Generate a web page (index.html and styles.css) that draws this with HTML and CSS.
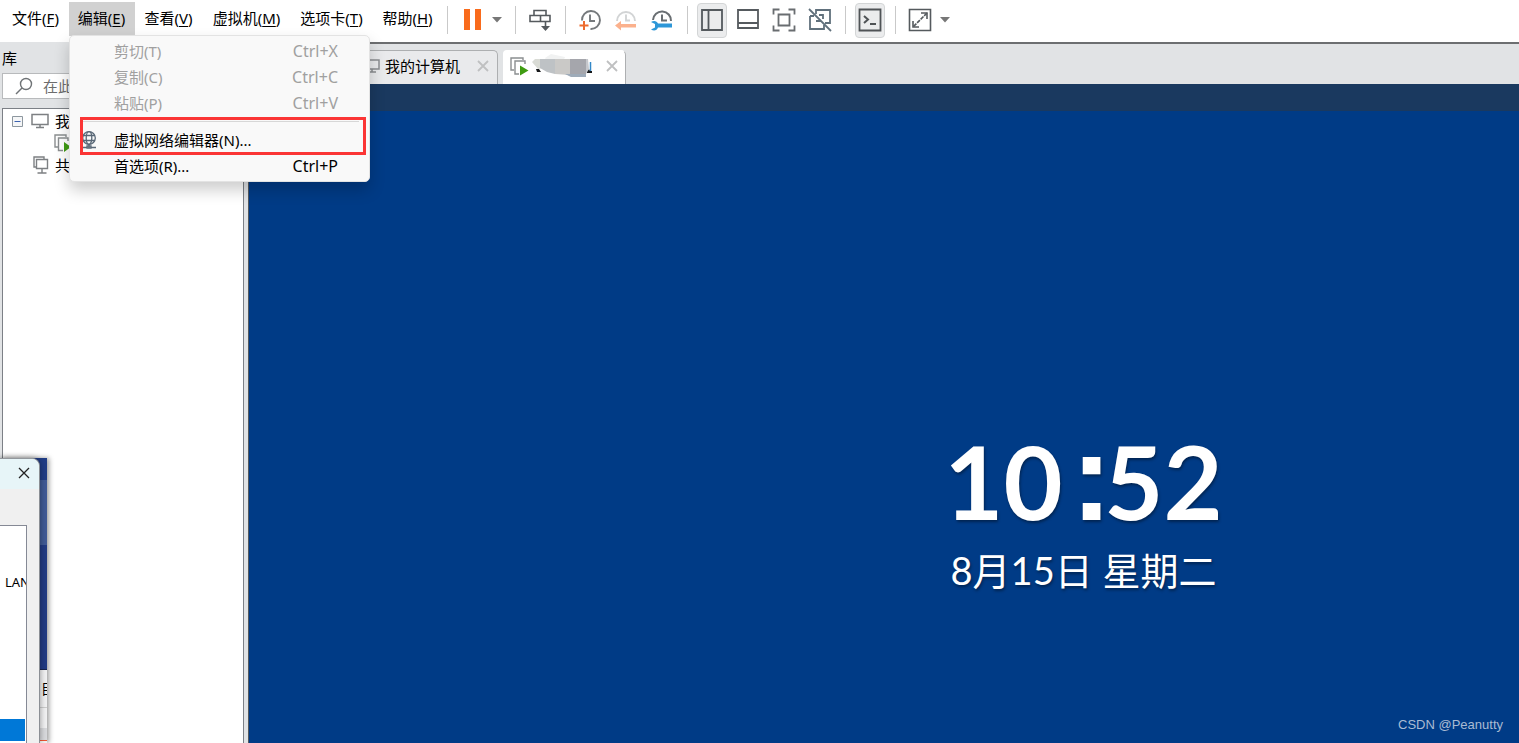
FILE: index.html
```html
<!DOCTYPE html>
<html lang="zh-CN">
<head>
<meta charset="utf-8">
<title>虚拟机</title>
<link rel="stylesheet" href="styles.css">
</head>
<body>
<header class="topbar">
  <nav class="menubar">
    <button class="menu-btn">文件(<u>F</u>)</button>
    <button class="menu-btn active">编辑(<u>E</u>)</button>
    <button class="menu-btn w-view">查看(<u>V</u>)</button>
    <button class="menu-btn w-vm">虚拟机(<u>M</u>)</button>
    <button class="menu-btn w-tabs">选项卡(<u>T</u>)</button>
    <button class="menu-btn w-help">帮助(<u>H</u>)</button>
  </nav>
  <div class="tools">
    <div class="group tight">
      <button class="tool" aria-label="暂停"><svg width="24" height="24"><path d="M4 1h6v21H4zM15 1h6v21h-6z" fill="#f96b1c"/></svg></button>
      <button class="caret" aria-label="电源选项"><svg width="10" height="6"><path d="M0 0h10L5 5.500z" fill="#777"/></svg></button>
    </div>
    <div class="group">
      <button class="tool" aria-label="发送按键"><svg width="24" height="24" fill="none" stroke="#555a5e" stroke-width="1.600"><path d="M6 2.500h12v5H6zM2 7.500h10.500v6H2zM12.500 7.500H22v6h-9.500zM17.500 13.500v8"/><path d="M13 18h9l-4.500 5z" fill="#555a5e" stroke="none"/></svg></button>
    </div>
    <div class="group">
      <button class="tool" aria-label="拍摄快照"><svg width="24" height="24" fill="none" stroke="#75797c" stroke-width="1.900"><path d="M4 12.500a9 9 0 1 1 8.500 8.500M12 6.500V13h5"/><path d="M1.500 17.500h9M6 13v9" stroke="#ed6b2d" stroke-width="2"/></svg></button>
      <button class="tool" aria-label="恢复快照"><svg width="24" height="24" fill="none" stroke="#d2d4d5" stroke-width="1.900"><path d="M3 13a9 9 0 1 1 18 0M12 6.500V12.500h4"/><path d="M1 17.500l6-4.500v3h15v3.500H7v3z" fill="#fbb18d" stroke="none"/></svg></button>
      <button class="tool" aria-label="管理快照"><svg width="24" height="24" fill="none" stroke="#696e72" stroke-width="2"><path d="M3 12a9 9 0 1 1 18 1M12 6.500V12.500h5"/><path d="M1 14c3-2 6-1 7 1.500h14v4H8c-1 3-4 4-7 2l4-2v-3.500z" fill="#2d97d8" stroke="none"/></svg></button>
    </div>
    <div class="group">
      <button class="tool on" aria-label="显示库"><svg width="24" height="24" fill="none" stroke="#555a5e" stroke-width="1.800"><path d="M2 2h20v20H2zM8.500 2v20"/></svg></button>
      <button class="tool" aria-label="缩略图栏"><svg width="24" height="24" fill="none" stroke="#555a5e" stroke-width="1.800"><path d="M2 2h20v18H2zM2 15h20"/></svg></button>
      <button class="tool" aria-label="全屏"><svg width="24" height="24" fill="none" stroke="#696d70" stroke-width="1.800"><path d="M6.500 6.500h11v11h-11zM1.500 6.500v-5h6M16.500 1.500h6v5M1.500 17.500v5h6M16.500 22.500h6v-5"/></svg></button>
      <button class="tool" aria-label="Unity"><svg width="24" height="24" fill="none" stroke="#60707c" stroke-width="1.800"><path d="M8 6V2h14v13h-5M2 8v13h14v-4M2 8h4M8 13h5M15 11V7h-4"/><path d="M1 1l22 22"/></svg></button>
    </div>
    <div class="group">
      <button class="tool on" aria-label="控制台"><svg width="24" height="24" fill="none" stroke="#4f5356" stroke-width="1.800"><path d="M1.500 1.500h21v21h-21z"/><path d="M6 8l4 3.500L6 15M12 16h6" stroke-width="2"/></svg></button>
    </div>
    <div class="group tight">
      <button class="tool" aria-label="拉伸"><svg width="24" height="24" fill="none" stroke="#555a5e" stroke-width="1.600"><path d="M1.500 1.500h21v21h-21zM13 5h6v6M5 13v6h6"/><path d="M19 5L5 19" stroke-dasharray="4 1"/></svg></button>
      <button class="caret" aria-label="拉伸选项"><svg width="10" height="6"><path d="M0 0h10L5 5.500z" fill="#777"/></svg></button>
    </div>
  </div>

  <div class="dropdown">
    <button class="item" disabled><span>剪切(T)</span><span class="key">Ctrl+X</span></button>
    <button class="item" disabled><span>复制(C)</span><span class="key">Ctrl+C</span></button>
    <button class="item" disabled><span>粘贴(P)</span><span class="key">Ctrl+V</span></button>
    <hr class="rule">
    <button class="item"><svg class="net" width="16" height="18" fill="none" stroke="#596877" stroke-width="1.300"><ellipse cx="8" cy="7" rx="6.300" ry="6.300"/><ellipse cx="8" cy="7" rx="2.800" ry="6.300"/><path d="M2 4.500h12M2 9.500h12M8 13v4M1 16.500h5M10 16.500h5M6 15h4v2H6z"/></svg><span>虚拟网络编辑器(N)...</span></button>
    <button class="item"><span>首选项(R)...</span><span class="key">Ctrl+P</span></button>
    <div class="highlight"></div>
  </div>
</header>

<div class="workspace">
  <aside class="library">
    <h2 class="lib-title">库</h2>
    <div class="search">
      <svg width="18" height="18" fill="none" stroke="#6f7376" stroke-width="1.400"><circle cx="11" cy="7" r="5.500"/><path d="M7 11l-6 6"/></svg>
      <input class="search-input" aria-label="搜索" placeholder="在此">
    </div>
    <div class="tree">
      <div class="node"><svg class="toggle" width="11" height="11"><path d="M.5.5h10v10H.5z" fill="#f5f6f7" stroke="#8d979f"/><path d="M2.500 5.500h6" stroke="#3c62b0"/></svg><svg width="18" height="16" fill="none" stroke="#7d8083" stroke-width="1.500"><path d="M1 1.500h16v10H1zM9 12v2.500M5 14.500h8"/></svg><span>我</span></div>
      <div class="node child"><svg width="18" height="18" fill="none" stroke="#8b8e90" stroke-width="1.400"><path d="M4 13H1V1h11v2M14 7V4H4.500v12.500H9"/><path d="M10 8l7 5-7 5z" fill="#3f9c12" stroke="none"/></svg></div>
      <div class="node shared"><svg width="16" height="18" fill="none" stroke="#7d8083" stroke-width="1.400"><path d="M3 11H1V1h10v2M3.500 3.500h11v9h-11zM9 13v4M4.500 17h9"/></svg><span>共</span></div>
    </div>
  </aside>

  <main class="main">
    <div class="tabs">
      <div class="tab home">
        <svg width="16" height="16" fill="none" stroke="#8a8d90" stroke-width="1.500"><path d="M1 2h13v9H1zM7 11v3M4 14h7"/></svg>
        <span>我的计算机</span>
        <button class="close" aria-label="关闭我的计算机"><svg width="12" height="12" stroke="#bfc0c1" stroke-width="1.800"><path d="M1 1l10 10M11 1L1 11"/></svg></button>
      </div>
      <div class="tab current">
        <svg width="19" height="19" fill="none" stroke="#8b8e90" stroke-width="1.400"><path d="M4 13H1V1h12v2M15 7V4H5v13h4"/><path d="M10 8.500l8.500 5-8.500 5z" fill="#3f9c12" stroke="none"/></svg>
        <svg class="mosaic" width="62" height="26"><path d="M13 5l6-4 14 3-2 5-16-1z" fill="#f1f2f2"/><path d="M4 16h3l2 3H5zM55 18l2-2 1 2h2v2h-5z" fill="#17191b"/><path d="M58.500 9v9" stroke="#3388c8" stroke-width="1.500"/><path d="M0 9l3-3h8v9l-5 1z" fill="#d9dbd5"/><path d="M8 6h15v15l-8-2-7-4z" fill="#bec2c5"/><path d="M23 6h15v16l-15-1z" fill="#cac9c7"/><path d="M38 6h16v16H38z" fill="#a5a6ac"/><path d="M54 6h2l1 10-3 5z" fill="#c5c7cc"/><path d="M33 21h21v3H39z" fill="#9eabb9"/></svg>
        <button class="close" aria-label="关闭虚拟机"><svg width="12" height="12" stroke="#bfc0c1" stroke-width="1.800"><path d="M1 1l10 10M11 1L1 11"/></svg></button>
      </div>
    </div>
    <div class="band"></div>
    <section class="screen">
      <div class="lock">
        <div class="time"><span>10</span><span class="colon">:</span><span>52</span></div>
        <div class="date">8月15日 星期二</div>
      </div>
      <div class="credit">CSDN @Peanutty</div>
    </section>
  </main>
</div>

<div class="back-window">
  <div class="photo"></div>
  <div class="back-text">目</div>
  <div class="back-row"></div>
  <div class="back-foot"></div>
</div>
<div class="dialog">
  <div class="dialog-title"><button class="close" aria-label="关闭"><svg width="12" height="12" stroke="#222" stroke-width="1.300"><path d="M1 1l10 10M11 1L1 11"/></svg></button></div>
  <div class="dialog-list"><span class="lan">LAN</span><div class="selected"></div></div>
</div>
</body>
</html>
```
FILE: styles.css
```css
* { box-sizing: border-box; }
body {
  margin: 0;
  height: 100vh;
  display: flex;
  flex-direction: column;
  overflow: hidden;
  background: #fff;
  color: #000;
  font: 15px/20px "Noto Sans", "Noto Sans CJK SC", sans-serif;
}
button { border: 0; padding: 0; background: none; font: inherit; color: inherit; }
svg { display: block; flex: none; }

.topbar { position: relative; z-index: 2; display: flex; height: 42px; background: #fff; }
.menubar { display: flex; padding: 2px 4px 6px 3px; }
.menu-btn { width: 66px; padding: 0 1px 2px 0; white-space: nowrap; }
.menu-btn u { text-underline-offset: 2px; }
.w-view { width: 68px; }
.w-vm { width: 88px; }
.w-tabs { width: 82px; }
.w-help { width: 70px; }
.menu-btn.active { background: #d1d1d1; }

.tools { display: flex; align-items: center; height: 40px; }
.group { display: flex; align-items: center; gap: 6px; padding: 0 10px 0 9px; height: 28px; border-left: 1px solid #c9c9c9; }
.group.tight { gap: 2px; }
.tool { display: flex; align-items: center; justify-content: center; width: 30px; height: 35px; border-radius: 4px; }
.tool.on { background: #ebeced; border: 1px solid #d3d5d6; }
.caret { display: flex; justify-content: center; width: 16px; }

.dropdown {
  position: absolute;
  left: 69px;
  top: 35px;
  width: 301px;
  padding: 3px 0 1px;
  background: #f9f9f9;
  border: 1px solid #e3e3e3;
  border-radius: 5px;
  box-shadow: 0 8px 16px rgba(0, 0, 0, .2);
}
.item { position: relative; display: flex; justify-content: space-between; width: 100%; height: 26px; padding: 2px 31px 4px 44px; text-align: left; }
.item:disabled { color: #a0a0a0; }
.key { font-size: 16px; }
.net { position: absolute; left: 11px; top: 3px; }
.rule { height: 1px; margin: 4px 10px 6px; border: 0; background: #d7d7d7; }
.highlight { position: absolute; left: 10px; right: 3px; top: 81px; height: 38px; border: 3px solid #fb3535; }

.workspace { flex: 1; display: flex; min-height: 0; }
.library { display: flex; flex-direction: column; width: 248px; padding: 6px 4px 0 2px; background: #e1e3e5; }
.lib-title { margin: 0 0 5px; font-size: 15px; line-height: 20px; font-weight: 400; }
.search { display: flex; align-items: center; gap: 10px; height: 26px; padding-left: 12px; background: #fff; border: 1px solid #b8babc; }
.search-input { min-width: 0; width: 100%; padding: 0; border: 0; outline: 0; background: none; font: inherit; }
.search-input::placeholder { color: #6d6d6d; opacity: 1; }
.tree { flex: 1; margin-top: 9px; padding-top: 1px; background: #fff; border: 1px solid #7c8086; border-bottom: 0; }
.node { display: flex; align-items: center; gap: 6px; height: 22px; padding-left: 9px; line-height: 22px; }
.toggle { margin-right: 2px; }
.node.child { padding-left: 51px; }
.node.shared { padding-left: 30px; }

.main { flex: 1; display: flex; flex-direction: column; min-width: 0; border-left: 1px solid #555a5e; }
.tabs { display: flex; align-items: flex-end; gap: 5px; height: 42px; padding-left: 108px; background: #e1e3e5; border-top: 2px solid #6c6e70; }
.tab { display: flex; align-items: center; height: 34px; padding-bottom: 3px; border: 1px solid #adafb1; border-bottom: 0; border-radius: 4px 5px 0 0; background: #e9eaec; }
.tab.home { width: 141px; padding-left: 7px; padding-right: 8px; gap: 4px; }
.tab.current { width: 123px; padding-left: 6px; padding-right: 7px; gap: 3px; background: #fff; border-left-color: #fff; border-top-color: #fff; }
.tab .close { margin-left: auto; }
.close { display: flex; }
.band { height: 27px; background: #1a395f; }
.screen { position: relative; flex: 1; background: #003b86; color: #fff; }
.lock { display: flex; flex-direction: column; align-items: center; padding: 306px 0 0 399px; text-shadow: 1px 2px 3px rgba(0, 0, 0, .4); }
.time { display: flex; align-items: baseline; height: 128px; font: 700 102px/120px Lato, sans-serif; }
.colon { margin: 0 -8px 0 8px; font-family: "Liberation Sans", sans-serif; font-size: 125px; }
.date { font: 400 38px/50px Lato, "Noto Sans CJK SC", sans-serif; }
.credit { position: absolute; right: 16px; bottom: 9px; color: #a9bbd3; font: 13px/18px "Liberation Sans", sans-serif; }

.back-window { position: absolute; z-index: 3; left: 0; bottom: 0; width: 47px; height: 285px; background: #f1f1f2; overflow: hidden; box-shadow: 2px 0 5px rgba(0, 0, 0, .4); }
.photo { height: 212px; background: linear-gradient(#203c85 0 22px, #3f5995 22px 87px, #213a83 87px); border-bottom: 1px solid #17234e; }
.back-text { height: 37px; padding: 9px 0 0 41px; font-size: 14px; line-height: 20px; }
.back-row { height: 21px; border-top: 1px solid #ccc; }
.back-foot { height: 13px; background: #d8d9dc; border-bottom: 1px solid #ee5533; }
.dialog { position: absolute; z-index: 4; left: 0; bottom: 0; display: flex; flex-direction: column; width: 40px; height: 285px; background: #f0f0f0; border-top: 1px solid #93989d; border-right: 1px solid #8b8f94; border-top-right-radius: 8px; overflow: hidden; box-shadow: 0 0 6px rgba(0, 0, 0, .4); }
.dialog-title { display: flex; align-items: center; justify-content: flex-end; height: 30px; padding: 0 9px 2px 0; background: #e7f5f8; }
.dialog-list { flex: 1; display: flex; flex-direction: column; justify-content: space-between; width: 27px; margin-top: 36px; padding: 46px 0 2px; background: #fff; border: 1px solid #858995; border-width: 1px 1px 0 0; overflow: hidden; }
.lan { padding-left: 5px; font-size: 13px; line-height: 20px; }
.selected { height: 22px; margin-right: 1px; background: #0078d7; }
```
